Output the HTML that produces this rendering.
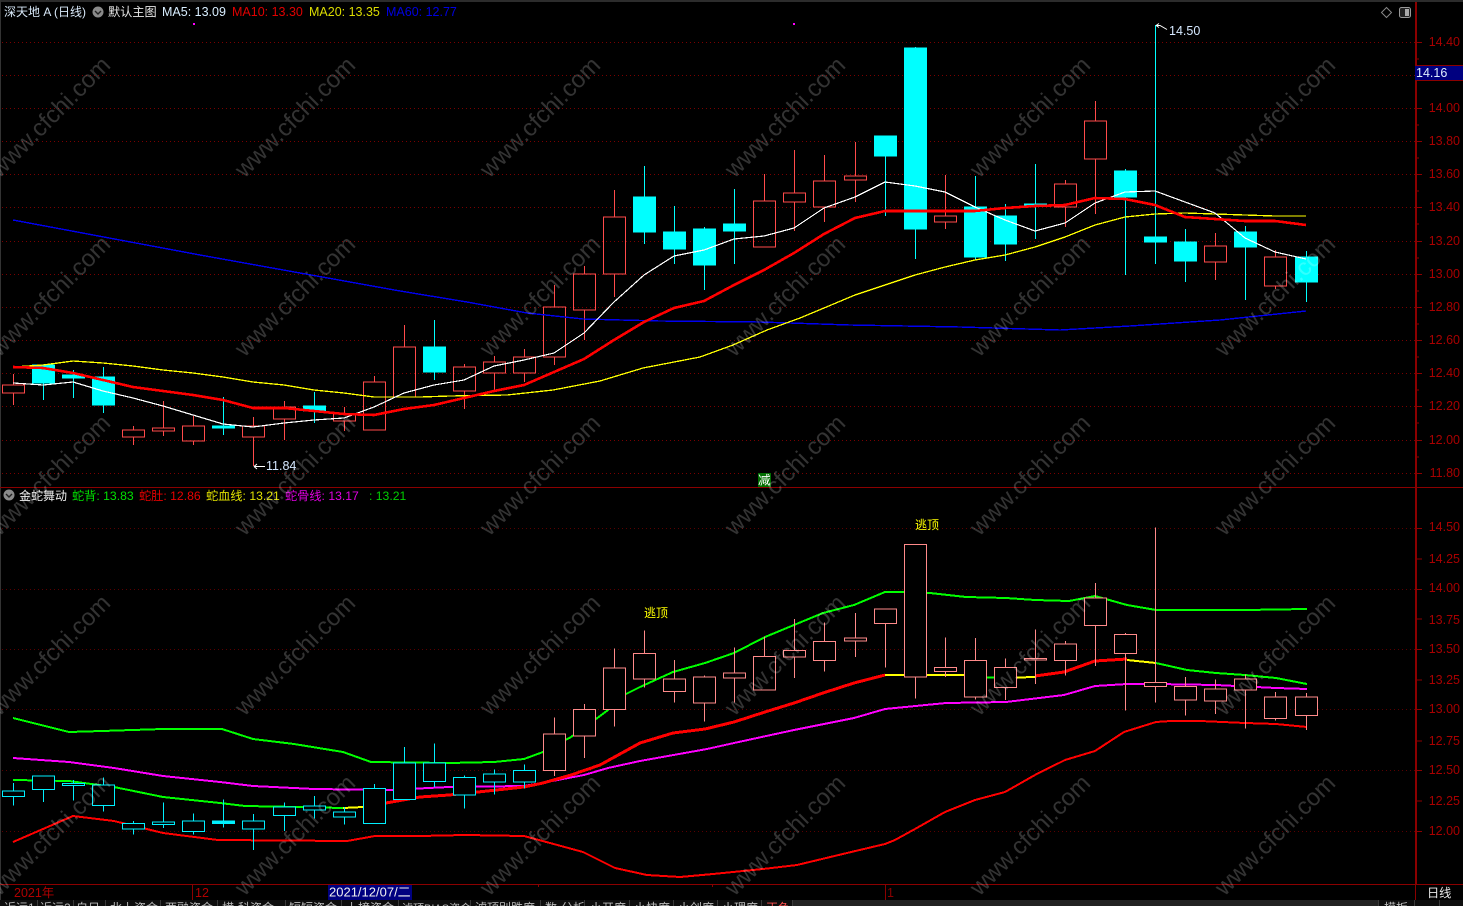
<!DOCTYPE html>
<html lang="zh">
<head>
<meta charset="utf-8">
<title>深天地A</title>
<style>
html,body{margin:0;padding:0;background:#000;width:1463px;height:906px;overflow:hidden}
svg{display:block;font-family:"Liberation Sans","Noto Sans CJK SC",sans-serif}
.l{fill:none;shape-rendering:crispEdges;stroke-linejoin:round}
.ax{fill:#a80000;font-size:12.5px;text-anchor:end}
.t{font-size:12.5px}
.h{font-size:12.2px}
.tab{fill:#bbb;font-size:12px}
</style>
</head>
<body>
<svg width="1463" height="906" viewBox="0 0 1463 906" xmlns="http://www.w3.org/2000/svg">
<defs>
<path id="a" vector-effect="non-scaling-stroke" d="M13.5 374V385M13.5 393V405M2.5 385H24.5V393H2.5ZM133.5 426V430M133.5 437V445M122.5 430H144.5V437H122.5ZM163.5 401V428M163.5 431V436M152.5 428H174.5V431H152.5ZM193.5 416V426M193.5 441V445M182.5 426H204.5V441H182.5ZM253.5 417V426M253.5 437V466M242.5 426H264.5V437H242.5ZM284.5 401V407M284.5 419V440M273.5 407H295.5V419H273.5ZM344.5 407V414M344.5 421V431M333.5 414H355.5V421H333.5ZM374.5 376V382M363.5 382H385.5V430H363.5ZM404.5 325V347M393.5 347H415.5V397H393.5ZM464.5 364V367M464.5 391V409M453.5 367H475.5V391H453.5ZM494.5 356V362M494.5 373V390M483.5 362H505.5V373H483.5ZM524.5 349V357M524.5 373V382M513.5 357H535.5V373H513.5Z"/>
<path id="b" vector-effect="non-scaling-stroke" d="M43.5 383V400M32.5 365H54.5V383H32.5ZM73.5 370V375M73.5 378V398M62.5 375H84.5V378H62.5ZM103.5 367V377M103.5 405V413M92.5 377H114.5V405H92.5ZM223.5 397V426M223.5 428V435M212.5 426H234.5V428H212.5ZM314.5 392V406M314.5 411V423M303.5 406H325.5V411H303.5ZM434.5 320V347M434.5 372V380M423.5 347H445.5V372H423.5Z"/>
<path id="c" vector-effect="non-scaling-stroke" d="M554.5 285V307M554.5 357V365M543.5 307H565.5V357H543.5ZM584.5 266V274M584.5 310V340M573.5 274H595.5V310H573.5ZM614.5 190V217M614.5 274V297M603.5 217H625.5V274H603.5ZM764.5 174V201M753.5 201H775.5V247H753.5ZM794.5 150V193M794.5 202V231M783.5 193H805.5V202H783.5ZM824.5 155V181M824.5 207V222M813.5 181H835.5V207H813.5ZM855.5 142V176M855.5 180V202M844.5 176H866.5V180H844.5ZM945.5 175V216M945.5 222V229M934.5 216H956.5V222H934.5ZM1065.5 180V184M1065.5 207V227M1054.5 184H1076.5V207H1054.5ZM1095.5 101V121M1095.5 159V214M1084.5 121H1106.5V159H1084.5ZM1215.5 233V246M1215.5 262V280M1204.5 246H1226.5V262H1204.5ZM1275.5 250V257M1275.5 286V289M1264.5 257H1286.5V286H1264.5Z"/>
<path id="d" vector-effect="non-scaling-stroke" d="M644.5 166V197M644.5 232V244M633.5 197H655.5V232H633.5ZM674.5 206V232M674.5 249V264M663.5 232H685.5V249H663.5ZM704.5 227V229M704.5 265V290M693.5 229H715.5V265H693.5ZM734.5 189V224M734.5 231V264M723.5 224H745.5V231H723.5ZM885.5 156V216M874.5 136H896.5V156H874.5ZM915.5 47V48M915.5 229V259M904.5 48H926.5V229H904.5ZM975.5 176V207M975.5 257V260M964.5 207H986.5V257H964.5ZM1005.5 204V216M1005.5 244V261M994.5 216H1016.5V244H994.5ZM1035.5 164V204M1035.5 206V239M1024.5 204H1046.5V206H1024.5ZM1125.5 169V171M1125.5 197V275M1114.5 171H1136.5V197H1114.5ZM1155.5 25V237M1155.5 242V264M1144.5 237H1166.5V242H1144.5ZM1185.5 229V242M1185.5 261V282M1174.5 242H1196.5V261H1174.5ZM1245.5 226V232M1245.5 247V300M1234.5 232H1256.5V247H1234.5ZM1306.5 251V257M1306.5 282V302M1295.5 257H1317.5V282H1295.5Z"/>
</defs>

<rect width="1463" height="906" fill="#000"/>
<rect x="0" y="0" width="1463" height="2" fill="#2c2c2c"/>
<rect x="0" y="0" width="1" height="900" fill="#333"/>

<!-- main grid -->
<path fill="none" stroke="#7a0000" stroke-dasharray="1 3" shape-rendering="crispEdges" d="M2 42.5H1415M2 75.5H1415M2 108.5H1415M2 141.5H1415M2 174.5H1415M2 207.5H1415M2 241.5H1415M2 274.5H1415M2 307.5H1415M2 340.5H1415M2 373.5H1415M2 406.5H1415M2 440.5H1415M2 473.5H1415"/>
<!-- lower grid -->
<path fill="none" stroke="#5a0000" stroke-dasharray="1 3" shape-rendering="crispEdges" d="M2 528.5H1415M2 589.5H1415M2 649.5H1415M2 709.5H1415M2 770.5H1415M2 831.5H1415"/>

<!-- main candles -->
<g shape-rendering="crispEdges">
<g fill="none" stroke="#ff4a4a"><use href="#a"/><use href="#c"/></g>
<g fill="#0ff" stroke="#0ff"><use href="#b"/><use href="#d"/></g>
</g>

<!-- MA lines -->
<polyline class="l" stroke="#0000f0" stroke-width="1.4" points="13,220 200,255 400,291 467,302 527,313 583,319 660,321 760,322 850,325 960,327 1060,330 1130,326 1220,320 1306,311"/>
<polyline class="l" stroke="#ffff00" stroke-width="1.3" points="13,367 43,365 73,361 103,363 133,366 163,370 193,373 223,377 253,382 284,385 314,390 344,393 374,397 420,397 450,396 507,395 553,390 600,381 643,368 700,357 733,345 767,330 800,318 824,308 855,295 885,285 915,275 945,267 975,260 1005,255 1035,247 1065,237 1095,225 1125,217 1155,214 1185,213 1215,214 1245,215 1275,216 1306,216"/>
<polyline class="l" stroke="#ffffff" stroke-width="1.2" points="13,383 43,385 73,382 103,391 133,398 163,406 193,415 223,424 253,427 284,423 314,420 344,418 374,407 404,393 434,385 464,380 494,366 524,360 554,353 584,333 614,302 644,275 674,256 704,250 734,239 764,236 794,228 824,208 855,197 885,182 915,186 945,192 975,207 1005,220 1035,231 1065,223 1095,203 1125,192 1155,191 1185,202 1215,213 1245,238 1275,252 1306,259"/>
<polyline class="l" stroke="#ff0000" stroke-width="2.6" points="13,367 43,368 73,373 103,380 133,387 163,391 193,395 223,400 253,408 284,408 314,411 344,414 374,415 404,409 434,405 464,398 494,391 524,385 554,372 584,359 614,340 644,322 674,308 704,301 734,285 764,270 794,253 824,234 855,218 885,211 915,211 945,211 975,211 1005,208 1035,206 1065,205 1095,198 1125,199 1155,205 1185,217 1215,219 1245,221 1275,221 1306,225"/>

<!-- high/low markers -->
<path fill="none" stroke="#fff" stroke-width="1" d="M1156 25.5l3-2M1156 25.5l3 2M1156 25.5h4l7 4"/>
<text x="1169" y="35" class="t" fill="#d5e8ff">14.50</text>
<path fill="none" stroke="#fff" stroke-width="1" d="M254 466.5l3-2.5M254 466.5l3 2.5M254 466.5h11"/>
<text x="266" y="470" class="t" fill="#d5e8ff">11.84</text>
<rect x="193" y="23" width="2" height="2" fill="#ff00ff"/>
<rect x="793" y="23" width="2" height="2" fill="#ff00ff"/>

<!-- pane separator -->
<rect x="0" y="487" width="1463" height="1" fill="#8b0000"/>

<!-- badge -->
<rect x="758" y="473" width="13" height="14" fill="#006e00"/>
<text x="758" y="484.5" font-size="12.5" fill="#fff">减</text>

<!-- lower lines -->
<polyline class="l" stroke="#00ff00" stroke-width="2" points="13,718 69,732 102,731 163,729 222,729 253,739 294,744 343,752 371,762 449,763 494,762 524,759 543,752 571,737 596,719 608,710 626,694 640,687 673,672 705,663 734,653 765,637 794,625 823,613 854,605 885,592 903,592 930,593 966,597 1006,598 1035,600 1069,601 1095,596 1127,605 1156,610 1245,610 1307,609"/>
<polyline class="l" stroke="#ff00ff" stroke-width="2" points="13,758 69,762 114,768 163,776 220,782 253,786 314,789 388,790 449,787 524,786 547,782 584,775 608,768 640,761 707,749 734,743 794,730 854,718 885,709 946,703 1006,702 1064,695 1095,686 1127,684 1156,684 1216,685 1276,688 1307,689"/>
<polyline class="l" stroke="#ff0000" stroke-width="2" points="13,842 73,816 114,821 163,833 218,840 347,841 375,836 420,836 465,835 524,836 550,843 583,852 615,868 647,875 680,877 713,874 763,869 797,865 847,853 885,844 895,840 915,829 945,812 975,800 1005,792 1035,775 1065,760 1095,751 1124,732 1156,722 1171,721 1200,721 1245,723 1276,724 1307,727"/>
<polyline class="l" stroke="#00ff00" stroke-width="2" points="13,780 69,781 114,787 163,797 220,803 245,806 298,807 343,808"/>
<polyline class="l" stroke="#ffff00" stroke-width="2" points="343,808 363,807 386,803"/>
<polyline class="l" stroke="#ff0000" stroke-width="3" points="386,803 420,797 449,795 478,792 524,787 543,783 571,775 600,765 640,743 673,733 705,729 734,722 765,712 794,703 823,693 854,683 885,675"/>
<polyline class="l" stroke="#ffff00" stroke-width="2" points="885,675 964,675 976,677"/>
<polyline class="l" stroke="#00ff00" stroke-width="2" points="976,677 1000,678"/>
<polyline class="l" stroke="#ffff00" stroke-width="2" points="1000,678 1035,677"/>
<polyline class="l" stroke="#ff0000" stroke-width="3" points="1035,676 1064,672 1095,661 1127,659"/>
<polyline class="l" stroke="#ffff00" stroke-width="2" points="1127,660 1156,663"/>
<polyline class="l" stroke="#00ff00" stroke-width="2" points="1156,663 1187,670 1216,673 1245,675 1276,678 1307,684"/>

<!-- lower candles -->
<g transform="translate(0 509.4) scale(1 .7309)" shape-rendering="crispEdges" fill="#000">
<g stroke="#00f0ff"><use href="#a"/><use href="#b"/></g>
<g stroke="#ff8a8a"><use href="#c"/><use href="#d"/></g>
</g>
<rect x="212" y="821" width="23" height="3" fill="#00f0ff"/>

<text x="644" y="617" font-size="12" fill="#ffff00">逃顶</text>
<text x="915" y="529" font-size="12" fill="#ffff00">逃顶</text>

<!-- axis -->
<rect x="1415" y="2" width="2" height="882" fill="#8b0000"/>
<rect x="1415" y="884" width="1" height="16" fill="#8b0000"/>
<rect x="0" y="884" width="1463" height="1" fill="#8b0000"/>
<path stroke="#8b0000" fill="none" shape-rendering="crispEdges" d="M1417 42.5h5M1417 59h2M1417 108.5h5M1417 125h2M1417 141.5h5M1417 158h2M1417 174.5h5M1417 191h2M1417 207.5h5M1417 224h2M1417 241.5h5M1417 258h2M1417 274.5h5M1417 291h2M1417 307.5h5M1417 324h2M1417 340.5h5M1417 357h2M1417 373.5h5M1417 390h2M1417 406.5h5M1417 423h2M1417 440.5h5M1417 457h2M1417 473.5h5M1417 528.5h5M1417 559h5M1417 589.5h5M1417 619h5M1417 649.5h5M1417 680h5M1417 709.5h5M1417 741h5M1417 770.5h5M1417 801h5M1417 831.5h5"/>
<g class="ax">
<text x="1460" y="46">14.40</text>
<text x="1460" y="112">14.00</text>
<text x="1460" y="145">13.80</text>
<text x="1460" y="178">13.60</text>
<text x="1460" y="211">13.40</text>
<text x="1460" y="245">13.20</text>
<text x="1460" y="278">13.00</text>
<text x="1460" y="311">12.80</text>
<text x="1460" y="344">12.60</text>
<text x="1460" y="377">12.40</text>
<text x="1460" y="410">12.20</text>
<text x="1460" y="444">12.00</text>
<text x="1460" y="477">11.80</text>
<text x="1460" y="531">14.50</text>
<text x="1460" y="563">14.25</text>
<text x="1460" y="592">14.00</text>
<text x="1460" y="624">13.75</text>
<text x="1460" y="653">13.50</text>
<text x="1460" y="684">13.25</text>
<text x="1460" y="713">13.00</text>
<text x="1460" y="745">12.75</text>
<text x="1460" y="774">12.50</text>
<text x="1460" y="805">12.25</text>
<text x="1460" y="835">12.00</text>
</g>
<rect x="1415" y="65" width="48" height="16" fill="#000080"/>
<rect x="1415" y="65" width="48" height="1" fill="#8b0000"/>
<rect x="1415" y="80" width="48" height="1" fill="#8b0000"/>
<text x="1416" y="77" class="t" fill="#dfeeff">14.16</text>

<!-- header -->
<text x="4" y="16" font-size="12" fill="#d8e8f8">深天地 A (日线)</text>
<circle cx="98" cy="12" r="5.5" fill="#8a8a8a"/>
<path d="M95 11l3 3 3-3" fill="none" stroke="#222" stroke-width="1.4"/>
<text x="108" y="16" class="h" fill="#e4e4e4">默认主图</text>
<text x="162" y="16" class="t" fill="#d8eeff">MA5: 13.09</text>
<text x="232" y="16" class="t" fill="#e00000">MA10: 13.30</text>
<text x="309" y="16" class="t" fill="#dddd00">MA20: 13.35</text>
<text x="386" y="16" class="t" fill="#0000e0">MA60: 12.77</text>
<path d="M1386.5 7.5l5 5-5 5-5-5z" fill="none" stroke="#888"/>
<rect x="1399.5" y="7.5" width="11" height="10" rx="2" fill="#222" stroke="#999"/>
<rect x="1405" y="9" width="4" height="7" fill="#aaa"/>

<!-- lower header -->
<circle cx="9" cy="495" r="5.5" fill="#8a8a8a"/>
<path d="M6 494l3 3 3-3" fill="none" stroke="#222" stroke-width="1.4"/>
<text x="19" y="500" font-size="12" fill="#f0f0f0">金蛇舞动</text>
<text x="72" y="500" class="h" fill="#00e000">蛇背: 13.83</text>
<text x="139" y="500" class="h" fill="#e80000">蛇肚: 12.86</text>
<text x="206" y="500" class="h" fill="#e0e000">蛇血线: 13.21</text>
<text x="285" y="500" class="h" fill="#e000e0">蛇骨线: 13.17</text>
<text x="369" y="500" class="h" fill="#00d000">: 13.21</text>

<!-- time axis -->
<text x="14" y="897" class="t" fill="#b00000">2021年</text>
<rect x="192" y="885" width="1" height="15" fill="#8b0000"/>
<text x="195" y="897" class="t" fill="#b00000">12</text>
<path stroke="#8b0000" d="M538.5 885v2M712.5 885v2" fill="none"/>
<rect x="885" y="885" width="1" height="15" fill="#8b0000"/>
<text x="887" y="897" class="t" fill="#8b0000">1</text>
<rect x="328" y="885" width="84" height="15" fill="#000080"/>
<text x="329" y="896.5" font-size="13" fill="#f0f0f0">2021/12/07/二</text>
<text x="1427" y="897" class="h" fill="#e8e8e8">日线</text>

<!-- watermark -->
<g font-size="24" fill="#fff" fill-opacity=".2" text-anchor="middle">
<text transform="rotate(-45 50 117)" x="50" y="125">www.cfchi.com</text>
<text transform="rotate(-45 295 117)" x="295" y="125">www.cfchi.com</text>
<text transform="rotate(-45 540 117)" x="540" y="125">www.cfchi.com</text>
<text transform="rotate(-45 785 117)" x="785" y="125">www.cfchi.com</text>
<text transform="rotate(-45 1030 117)" x="1030" y="125">www.cfchi.com</text>
<text transform="rotate(-45 1275 117)" x="1275" y="125">www.cfchi.com</text>
<text transform="rotate(-45 50 296)" x="50" y="304">www.cfchi.com</text>
<text transform="rotate(-45 295 296)" x="295" y="304">www.cfchi.com</text>
<text transform="rotate(-45 540 296)" x="540" y="304">www.cfchi.com</text>
<text transform="rotate(-45 785 296)" x="785" y="304">www.cfchi.com</text>
<text transform="rotate(-45 1030 296)" x="1030" y="304">www.cfchi.com</text>
<text transform="rotate(-45 1275 296)" x="1275" y="304">www.cfchi.com</text>
<text transform="rotate(-45 50 475)" x="50" y="483">www.cfchi.com</text>
<text transform="rotate(-45 295 475)" x="295" y="483">www.cfchi.com</text>
<text transform="rotate(-45 540 475)" x="540" y="483">www.cfchi.com</text>
<text transform="rotate(-45 785 475)" x="785" y="483">www.cfchi.com</text>
<text transform="rotate(-45 1030 475)" x="1030" y="483">www.cfchi.com</text>
<text transform="rotate(-45 1275 475)" x="1275" y="483">www.cfchi.com</text>
<text transform="rotate(-45 50 655)" x="50" y="663">www.cfchi.com</text>
<text transform="rotate(-45 295 655)" x="295" y="663">www.cfchi.com</text>
<text transform="rotate(-45 540 655)" x="540" y="663">www.cfchi.com</text>
<text transform="rotate(-45 785 655)" x="785" y="663">www.cfchi.com</text>
<text transform="rotate(-45 1030 655)" x="1030" y="663">www.cfchi.com</text>
<text transform="rotate(-45 1275 655)" x="1275" y="663">www.cfchi.com</text>
<text transform="rotate(-45 50 835)" x="50" y="843">www.cfchi.com</text>
<text transform="rotate(-45 295 835)" x="295" y="843">www.cfchi.com</text>
<text transform="rotate(-45 540 835)" x="540" y="843">www.cfchi.com</text>
<text transform="rotate(-45 785 835)" x="785" y="843">www.cfchi.com</text>
<text transform="rotate(-45 1030 835)" x="1030" y="843">www.cfchi.com</text>
<text transform="rotate(-45 1275 835)" x="1275" y="843">www.cfchi.com</text>
</g>

<!-- bottom tabs -->
<rect x="0" y="900" width="1463" height="6" fill="#222"/>
<rect x="0" y="900" width="792" height="6" fill="#0e0e0e"/>
<rect x="1378" y="900" width="85" height="6" fill="#0e0e0e"/>
<path stroke="#3a3a3a" fill="none" d="M37.5 900v6M73.5 900v6M105.5 900v6M160.5 900v6M217.5 900v6M285.5 900v6M341.5 900v6M398.5 900v6M470.5 900v6M540.5 900v6M584.5 900v6M629.5 900v6M673.5 900v6M717.5 900v6M761.5 900v6M792.5 900v6M1378.5 900v6M1414.5 900v6M1439.5 900v6"/>
<g class="tab">
<text x="4" y="912">近远1</text>
<text x="40" y="912">近远2</text>
<text x="76" y="912">自日</text>
<text x="110" y="912">北上资金</text>
<text x="165" y="912">两融资金</text>
<text x="222" y="912">横·科资金</text>
<text x="289" y="912">短短资金</text>
<text x="346" y="912">上榜资金</text>
<text x="402" y="912" font-size="11">滤顶BIAS资金</text>
<text x="475" y="912">滤顶别跌度</text>
<text x="545" y="912">数·分析</text>
<text x="590" y="912">小开度</text>
<text x="634" y="912">小快度</text>
<text x="678" y="912">小创度</text>
<text x="722" y="912">小理度</text>
<text x="766" y="912" fill="#ff5050">正负</text>
<text x="1384" y="912">模板</text>
</g>
</svg>
</body>
</html>
